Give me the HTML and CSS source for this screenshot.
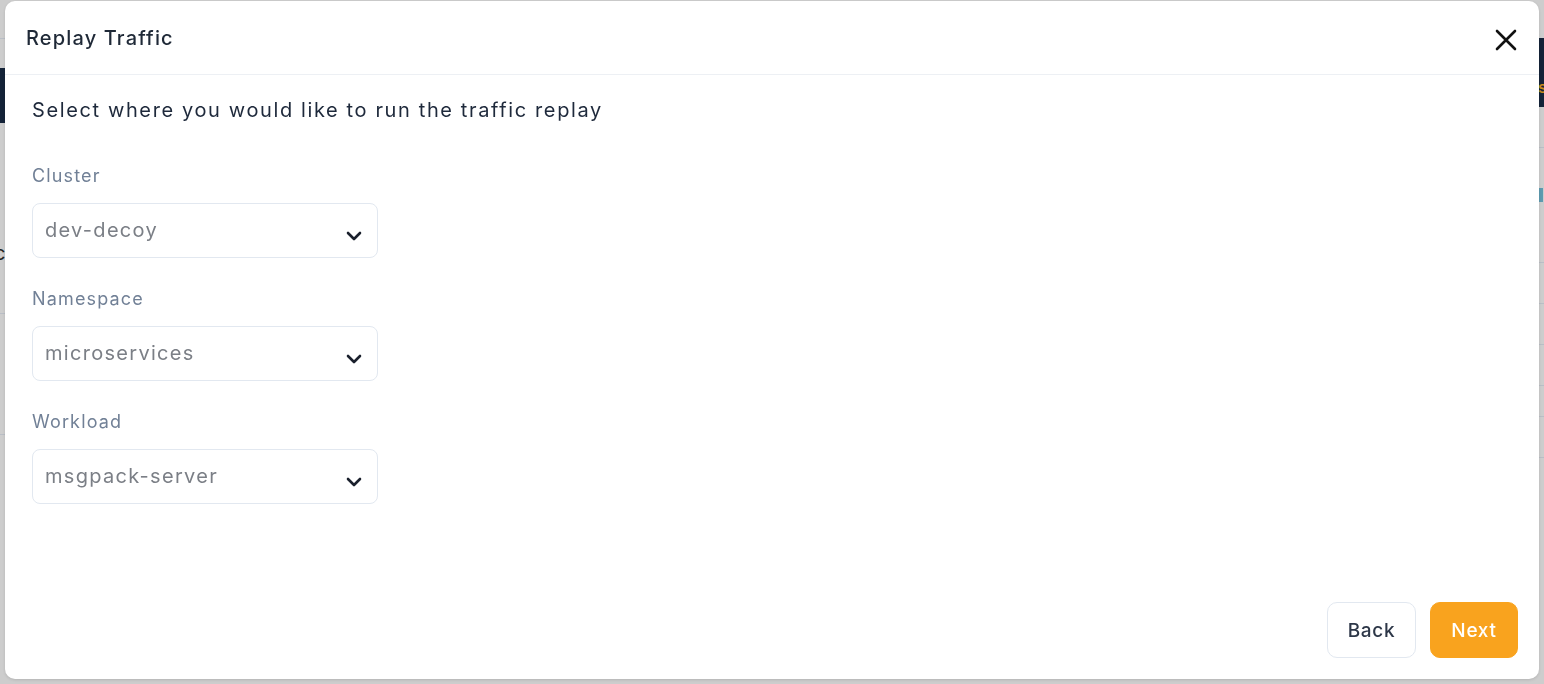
FILE: index.html
```html
<!DOCTYPE html>
<html lang="en">
<head>
<meta charset="utf-8">
<title>Replay Traffic</title>
<link rel="stylesheet" href="styles.css">
</head>
<body>
<div class="page">
  <div class="side side-left">
    <div class="gap g38"></div>
    <div class="rule"></div>
    <div class="gap g29"></div>
    <div class="navy h55"></div>
    <div class="gap g120"></div>
    <div class="glyph">c</div>
    <div class="gap g50"></div>
    <div class="rule"></div>
    <div class="gap g120"></div>
    <div class="rule"></div>
  </div>
  <div class="main"></div>
  <div class="side side-right">
    <div class="gap g38"></div>
    <div class="navy h69"><span class="accent">s</span></div>
    <div class="gap g40"></div>
    <div class="rule"></div>
    <div class="gap g40"></div>
    <div class="teal"></div>
    <div class="gap g60"></div>
    <div class="rule"></div>
    <div class="gap g40"></div>
    <div class="rule"></div>
    <div class="gap g40"></div>
    <div class="rule"></div>
    <div class="gap g40"></div>
    <div class="rule"></div>
    <div class="gap g30"></div>
    <div class="rule"></div>
    <div class="gap g40"></div>
    <div class="rule"></div>
  </div>
</div>

<div class="overlay">
  <div class="modal" role="dialog" aria-labelledby="modal-title">
    <header class="modal-header">
      <h2 id="modal-title" class="modal-title">Replay Traffic</h2>
      <button class="close-btn" aria-label="Close">
        <svg width="22" height="22" viewBox="0 0 22 22" aria-hidden="true">
          <path d="M2 2 L20 20 M20 2 L2 20" stroke="#111111" stroke-width="2.6" stroke-linecap="round" fill="none"/>
        </svg>
      </button>
    </header>
    <div class="modal-body">
      <p class="lead">Select where you would like to run the traffic replay</p>
      <div class="field">
        <label class="field-label">Cluster</label>
        <div class="select">
          <span class="select-value">dev-decoy</span>
          <svg class="chevron" width="16" height="10" viewBox="0 0 16 10" aria-hidden="true"><path d="M2 2 L8 8 L14 2" stroke="#1a202c" stroke-width="2.6" stroke-linecap="round" stroke-linejoin="round" fill="none"/></svg>
        </div>
      </div>
      <div class="field">
        <label class="field-label">Namespace</label>
        <div class="select">
          <span class="select-value">microservices</span>
          <svg class="chevron" width="16" height="10" viewBox="0 0 16 10" aria-hidden="true"><path d="M2 2 L8 8 L14 2" stroke="#1a202c" stroke-width="2.6" stroke-linecap="round" stroke-linejoin="round" fill="none"/></svg>
        </div>
      </div>
      <div class="field">
        <label class="field-label">Workload</label>
        <div class="select">
          <span class="select-value">msgpack-server</span>
          <svg class="chevron" width="16" height="10" viewBox="0 0 16 10" aria-hidden="true"><path d="M2 2 L8 8 L14 2" stroke="#1a202c" stroke-width="2.6" stroke-linecap="round" stroke-linejoin="round" fill="none"/></svg>
        </div>
      </div>
    </div>
    <footer class="modal-footer">
      <button class="btn btn-back">Back</button>
      <button class="btn btn-next">Next</button>
    </footer>
  </div>
</div>
</body>
</html>
```

FILE: styles.css
```css
* { box-sizing: border-box; }

html, body {
  margin: 0;
  padding: 0;
  height: 100%;
}

body {
  font-family: Inter, "Open Sans", "Liberation Sans", sans-serif;
  background: #cdcdcd;
  overflow: hidden;
}

.page {
  display: flex;
  height: 684px;
  background: #cdcdcd;
}

.side {
  width: 6px;
  display: flex;
  flex-direction: column;
}

.main { flex: 1; }

.gap.g29 { height: 29px; }
.gap.g30 { height: 30px; }
.gap.g38 { height: 38px; }
.gap.g40 { height: 40px; }
.gap.g50 { height: 50px; }
.gap.g60 { height: 60px; }
.gap.g120 { height: 120px; }

.rule { height: 1px; background: #b9bec6; }

.navy { background: #142338; }
.navy.h55 { height: 55px; }
.navy.h69 { height: 69px; display: flex; align-items: flex-end; padding-bottom: 12px; }

.accent {
  color: #c8891c;
  font-size: 16px;
  line-height: 1;
  font-weight: 600;
}

.teal { height: 14px; background: #5d9bb0; width: 5px; }

.glyph {
  font-size: 20px;
  line-height: 20px;
  color: #222;
  margin-left: -6px;
}

.overlay {
  position: fixed;
  inset: 0;
  padding: 1px 5px 5px 5px;
  display: flex;
}

.modal {
  width: 1534px;
  height: 678px;
  background: #ffffff;
  border-radius: 10px;
  display: flex;
  flex-direction: column;
  box-shadow: 0 1px 3px rgba(0,0,0,0.12);
}

.modal-header {
  height: 74px;
  border-bottom: 1px solid #edf0f4;
  display: flex;
  align-items: center;
  justify-content: space-between;
  padding: 0 20px 0 21px;
}

.modal-title {
  margin: 0;
  font-size: 20px;
  font-weight: 500;
  color: #1f2937;
  letter-spacing: 1.15px;
}

.close-btn {
  border: none;
  background: transparent;
  padding: 0;
  width: 24px;
  height: 24px;
  display: flex;
  align-items: center;
  justify-content: center;
  margin-top: 4px;
  margin-right: 1px;
}

.modal-body {
  flex: 1;
  padding: 22px 27px 0 27px;
  display: flex;
  flex-direction: column;
  align-items: flex-start;
}

.lead {
  margin: 0 0 46px 0;
  font-size: 20px;
  line-height: 26px;
  color: #1e293b;
  letter-spacing: 1.62px;
}

.field {
  display: flex;
  flex-direction: column;
  gap: 20px;
  margin-bottom: 34px;
}

.field-label {
  font-size: 18px;
  line-height: 14px;
  color: #718096;
  letter-spacing: 1.15px;
}

.select {
  width: 346px;
  height: 55px;
  border: 1px solid #e2e8f0;
  border-radius: 8px;
  display: flex;
  align-items: center;
  justify-content: space-between;
  padding: 0 15px 0 12px;
}

.select-value {
  font-size: 20px;
  color: #7b7f86;
  letter-spacing: 1.3px;
  margin-top: -2px;
}

.chevron { margin-top: 10px; }

.modal-footer {
  display: flex;
  justify-content: flex-end;
  gap: 14px;
  padding: 0 21px 21px 0;
}

.btn {
  height: 56px;
  border-radius: 10px;
  font-family: inherit;
  font-size: 19px;
  font-weight: 500;
  letter-spacing: 0.7px;
  padding: 0;
}

.btn-back {
  width: 89px;
  background: #ffffff;
  border: 1px solid #e2e8f0;
  color: #2d3748;
}

.btn-next {
  width: 88px;
  background: #f9a31e;
  border: 1px solid #f9a31e;
  color: #ffffff;
}
```
